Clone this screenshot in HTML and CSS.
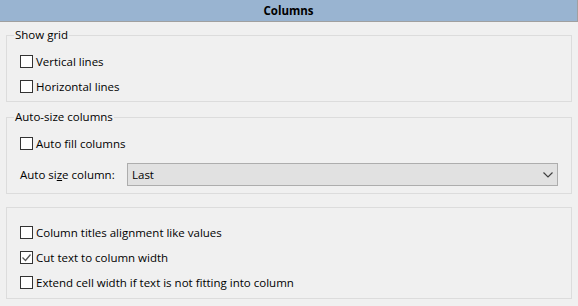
FILE: index.html
```html
<!DOCTYPE html>
<html lang="en">

<head>
  <meta charset="UTF-8">
  <meta name="viewport" content="width=device-width, initial-scale=1.0">
  <title>Columns</title>
  <link rel="stylesheet" href="styles.css">
</head>

<body>
  <div class="titlebar">Columns</div>

  <fieldset class="group">
    <legend>Show grid</legend>
    <label class="check"><span class="box"></span>Vertical lines</label>
    <label class="check"><span class="box"></span>Horizontal lines</label>
  </fieldset>

  <fieldset class="group">
    <legend>Auto-size columns</legend>
    <label class="check"><span class="box"></span>Auto fill columns</label>
    <div class="field">
      <span class="field-label">Auto si<u>z</u>e column:</span>
      <div class="combo">
        <span>Last</span>
        <svg width="10" height="6" viewBox="0 0 10 6">
          <polyline points="0.5,0.5 5,5 9.5,0.5" fill="none" stroke="#404040" stroke-width="1.2" />
        </svg>
      </div>
    </div>
  </fieldset>

  <fieldset class="group plain">
    <label class="check"><span class="box"></span>Column titles alignment like values</label>
    <label class="check"><span class="box checked">
        <svg width="11" height="11" viewBox="0 0 11 11">
          <polyline points="1.5,5.5 4.5,8.5 9.5,2.5" fill="none" stroke="#555" stroke-width="1.3" />
        </svg>
      </span>Cut text to column width</label>
    <label class="check"><span class="box"></span>Extend cell width if text is not fitting into column</label>
  </fieldset>
</body>

</html>
```

FILE: styles.css
```css
body {
  margin: 0;
  background-color: #f0f0f0;
  font-family: "Open Sans", "Noto Sans", sans-serif;
  font-size: 11.5px;
  color: #000;
}

.titlebar {
  height: 21px;
  line-height: 21px;
  background-color: #99b4d1;
  border-bottom: 1px solid #a0a0a0;
  border-right: 1px solid #a0a0a0;
  text-align: center;
  font-weight: bold;
}

.group {
  margin: 7px 6px 0 6px;
  padding: 6px 0 2px 13px;
  border: 1px solid #dcdcdc;
  min-width: 0;
}

.group:first-of-type {
  margin-top: 5px;
}

.group legend {
  margin-left: -6px;
  padding: 0 1px;
  line-height: 16px;
}

.group.plain {
  margin-top: 13px;
  padding-top: 12px;
  padding-bottom: 3px;
}

.check {
  display: flex;
  align-items: center;
  height: 25px;
}

.box {
  width: 11px;
  height: 11px;
  border: 1px solid #333;
  background-color: #fff;
  margin-right: 3px;
  display: flex;
  align-items: center;
  justify-content: center;
}

.field {
  display: flex;
  align-items: center;
  height: 23px;
  margin: 7px 0 5px 0;
}

.field-label {
  width: 107px;
}

.combo {
  box-sizing: border-box;
  width: 431px;
  height: 23px;
  border: 1px solid #adadad;
  background-color: #e1e1e1;
  display: flex;
  align-items: center;
  justify-content: space-between;
  padding: 0 4px 0 4px;
}
```
